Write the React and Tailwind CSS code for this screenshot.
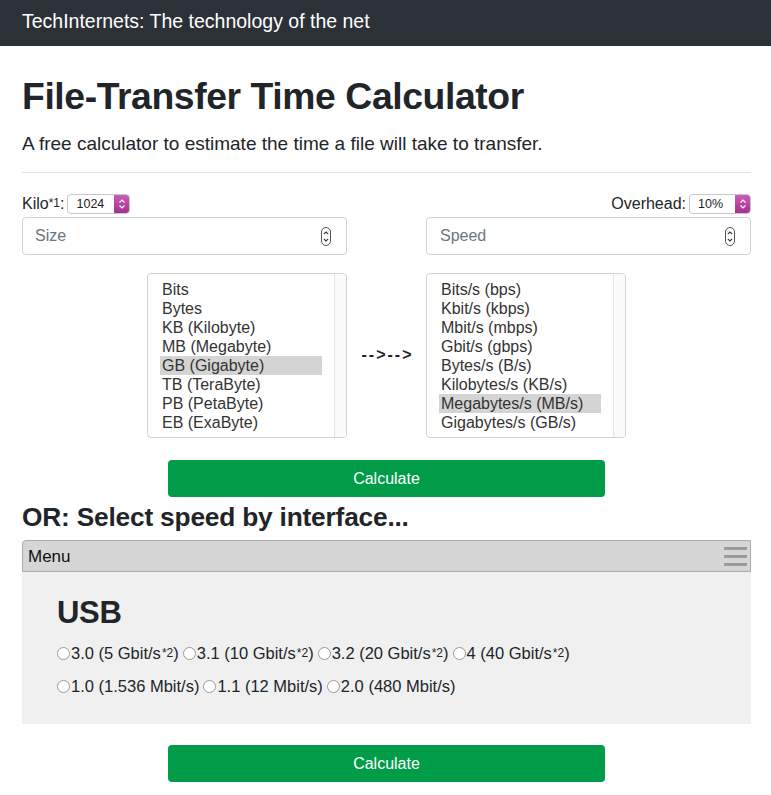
import React from "react";

const F = { fontFamily: '"Liberation Sans", Arial, sans-serif' };

function BigStepper() {
  return (
    <svg width="10" height="19" viewBox="0 0 10 19" className="shrink-0">
      <rect x="0.5" y="0.5" width="9" height="18" rx="4.5" fill="#fff" stroke="#555" strokeWidth="1" />
      <path d="M2.8 7.2 L5 5 L7.2 7.2" fill="none" stroke="#333" strokeWidth="1.1" />
      <path d="M2.8 11.8 L5 14 L7.2 11.8" fill="none" stroke="#333" strokeWidth="1.1" />
    </svg>
  );
}

function SmallSelect({ value, width }) {
  return (
    <div className={`flex h-[20px] ${width} rounded-[4px] border border-[#c8c8c8] bg-white overflow-hidden`}>
      <div className="flex-1 flex items-center pl-[8px] text-[12.5px] text-[#222]">{value}</div>
      <div className="w-[15px] flex items-center justify-center bg-gradient-to-b from-[#cc5cbb] to-[#a52f8e]">
        <svg width="8" height="12" viewBox="0 0 8 12">
          <path d="M1.5 4.5 L4 2 L6.5 4.5" fill="none" stroke="#fff" strokeWidth="1.2" />
          <path d="M1.5 7.5 L4 10 L6.5 7.5" fill="none" stroke="#fff" strokeWidth="1.2" />
        </svg>
      </div>
    </div>
  );
}

function ListBox({ items, selected }) {
  return (
    <div className="flex w-[200px] h-[165px] rounded-[4px] border border-[#ced4da] bg-white overflow-hidden">
      <div className="flex-1 py-[6px] px-[12px] pr-[12px]">
        {items.map((it) => (
          <div
            key={it}
            className={`h-[19px] leading-[19px] px-[2px] text-[16px] text-[#333] whitespace-nowrap ${
              it === selected ? "bg-[#d4d4d4] text-[#111]" : ""
            }`}
          >
            {it}
          </div>
        ))}
      </div>
      <div className="w-[12px] border-l border-[#e6e6e6] bg-[#fafafa]" />
    </div>
  );
}

function Radio({ label, sup }) {
  return (
    <span className="inline-flex items-center mr-[4px]">
      <span className="w-[13px] h-[13px] rounded-full border border-[#9a9a9a] bg-white mr-[1px]" />
      <span>
        {label}
        {sup && <sup className="text-[12px] relative -top-[2px] ml-[1px]">{sup}</sup>}
        {sup && ")"}
      </span>
    </span>
  );
}

export default function App() {
  const sizes = ["Bits", "Bytes", "KB (Kilobyte)", "MB (Megabyte)", "GB (Gigabyte)", "TB (TeraByte)", "PB (PetaByte)", "EB (ExaByte)"];
  const speeds = ["Bits/s (bps)", "Kbit/s (kbps)", "Mbit/s (mbps)", "Gbit/s (gbps)", "Bytes/s (B/s)", "Kilobytes/s (KB/s)", "Megabytes/s (MB/s)", "Gigabytes/s (GB/s)"];
  return (
    <div style={F} className="w-[771px] min-h-[795px] bg-white text-[#212529]">
      <div className="h-[46px] bg-[#2c3137] flex items-center px-[22px] pb-[2px] text-white text-[19.5px]">
        TechInternets: The technology of the net
      </div>
      <div className="pl-[22px] pr-[20px]">
        <h1 className="pt-[26px] text-[37.3px] leading-[48px] font-bold tracking-[-0.4px] text-[#212529]">
          File-Transfer Time Calculator
        </h1>
        <p className="mt-[10px] text-[19px] leading-[27px] text-[#212529]">
          A free calculator to estimate the time a file will take to transfer.
        </p>
        <hr className="mt-[15px] border-t border-[#e3e3e3]" />

        <div className="flex justify-between mt-[21px]">
          <div className="w-[325px]">
            <div className="flex items-center h-[20px] text-[16px]">
              <span className="mr-[3px]">
                Kilo<sup className="text-[12px] relative -top-[2px]">*1</sup>:
              </span>
              <SmallSelect value="1024" width="w-[63px]" />
            </div>
            <div className="mt-[3px] h-[38px] flex items-center justify-between rounded-[4px] border border-[#ced4da] pl-[12px] pr-[15px] text-[16px] text-[#6c757d]">
              <span>Size</span>
              <BigStepper />
            </div>
          </div>
          <div className="w-[325px]">
            <div className="flex items-center justify-end h-[20px] text-[16px]">
              <span className="mr-[3px]">Overhead:</span>
              <SmallSelect value="10%" width="w-[62px]" />
            </div>
            <div className="mt-[3px] h-[38px] flex items-center justify-between rounded-[4px] border border-[#ced4da] pl-[13px] pr-[15px] text-[16px] text-[#6c757d]">
              <span>Speed</span>
              <BigStepper />
            </div>
          </div>
        </div>

        <div className="flex justify-between mt-[18px]">
          <div className="w-[325px] flex justify-end">
            <ListBox items={sizes} selected="GB (Gigabyte)" />
          </div>
          <div className="flex-1 flex items-center justify-center text-[16px] tracking-[2px] font-bold pl-[2px] pb-[2px]">--&gt;--&gt;</div>
          <div className="w-[325px] flex justify-start">
            <ListBox items={speeds} selected="Megabytes/s (MB/s)" />
          </div>
        </div>

        <button className="block mx-auto mt-[22px] w-[437px] h-[37px] rounded-[4px] bg-[#009c48] text-white text-[16px]">
          Calculate
        </button>

        <h4 className="mt-[6px] text-[26.3px] leading-[29px] font-bold tracking-[-0.2px]">
          OR: Select speed by interface...
        </h4>

        <div className="mt-[8px] h-[32px] flex items-center justify-between bg-[#d6d6d6] border border-[#acacac] rounded-tl-[4px] pl-[5px] pr-[3px] text-[17px] text-[#111]">
          <span className="pt-[2px]">Menu</span>
          <div className="flex flex-col gap-[5px]">
            <div className="w-[23px] h-[3px] bg-[#9a9a9a]" />
            <div className="w-[23px] h-[3px] bg-[#9a9a9a]" />
            <div className="w-[23px] h-[3px] bg-[#9a9a9a]" />
          </div>
        </div>
        <div className="h-[152px] bg-[#f0f0f0] pl-[35px] pt-[22px]">
          <h2 className="text-[31px] leading-[38px] font-bold tracking-[-0.3px]">USB</h2>
          <div className="mt-[10px] flex items-center h-[22px] text-[16.5px] text-[#212529]">
            <Radio label="3.0 (5 Gbit/s" sup="*2" />
            <Radio label="3.1 (10 Gbit/s" sup="*2" />
            <Radio label="3.2 (20 Gbit/s" sup="*2" />
            <Radio label="4 (40 Gbit/s" sup="*2" />
          </div>
          <div className="mt-[11px] flex items-center h-[22px] text-[16.5px] text-[#212529]">
            <Radio label="1.0 (1.536 Mbit/s)" />
            <Radio label="1.1 (12 Mbit/s)" />
            <Radio label="2.0 (480 Mbit/s)" />
          </div>
        </div>

        <button className="block mx-auto mt-[21px] w-[437px] h-[37px] rounded-[4px] bg-[#009c48] text-white text-[16px]">
          Calculate
        </button>
      </div>
    </div>
  );
}
